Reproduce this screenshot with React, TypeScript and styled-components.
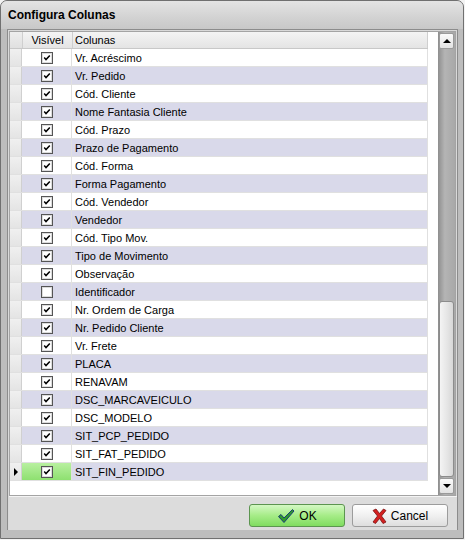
import styled, { createGlobalStyle } from 'styled-components'

const GlobalStyle = createGlobalStyle`
  html, body {
    margin: 0;
    padding: 0;
    background: #f2f2f2;
  }
  body {
    font-family: 'Liberation Sans', Arial, sans-serif;
  }
`

type Row = { label: string; visible: boolean }

const rows: Row[] = [
  { label: 'Vr. Acréscimo', visible: true },
  { label: 'Vr. Pedido', visible: true },
  { label: 'Cód. Cliente', visible: true },
  { label: 'Nome Fantasia Cliente', visible: true },
  { label: 'Cód. Prazo', visible: true },
  { label: 'Prazo de Pagamento', visible: true },
  { label: 'Cód. Forma', visible: true },
  { label: 'Forma Pagamento', visible: true },
  { label: 'Cód. Vendedor', visible: true },
  { label: 'Vendedor', visible: true },
  { label: 'Cód. Tipo Mov.', visible: true },
  { label: 'Tipo de Movimento', visible: true },
  { label: 'Observação', visible: true },
  { label: 'Identificador', visible: false },
  { label: 'Nr. Ordem de Carga', visible: true },
  { label: 'Nr. Pedido Cliente', visible: true },
  { label: 'Vr. Frete', visible: true },
  { label: 'PLACA', visible: true },
  { label: 'RENAVAM', visible: true },
  { label: 'DSC_MARCAVEICULO', visible: true },
  { label: 'DSC_MODELO', visible: true },
  { label: 'SIT_PCP_PEDIDO', visible: true },
  { label: 'SIT_FAT_PEDIDO', visible: true },
  { label: 'SIT_FIN_PEDIDO', visible: true }
]

const CheckBox = ({ checked }: { checked: boolean }) => (
  <svg width="12" height="12" viewBox="0 0 12 12">
    <rect x="0.5" y="0.5" width="11" height="11" fill="#fff" stroke="#555" />
    <rect x="1.5" y="1.5" width="9" height="9" fill="none" stroke="#dcdcdc" />
    {checked && (
      <path d="M3.2 5.6 L5 7.6 L8.8 3.4" fill="none" stroke="#000" strokeWidth="1.5" />
    )}
  </svg>
)

const CheckIcon = () => (
  <svg width="18" height="16" viewBox="0 0 18 16">
    <path
      d="M1.5 8.5 L4 6.5 L7 10 L15.5 1.5 L17 3 L7 14.5 Z"
      fill="#2f9a2a"
      stroke="#1a3a7a"
      strokeWidth="1"
      strokeLinejoin="round"
    />
  </svg>
)

const CrossIcon = () => (
  <svg width="15" height="16" viewBox="0 0 15 16">
    <path
      d="M1 2.5 L4 1 L7.5 5.5 L11.5 1 L14 2.5 L9.5 8 L14 14 L11 15.5 L7.5 10.5 L3.5 15.5 L1 14 L5.5 8 Z"
      fill="#d32020"
      stroke="#7a1010"
      strokeWidth="0.8"
      strokeLinejoin="round"
    />
  </svg>
)

const App = () => {
  const current = rows.length - 1
  return (
    <>
      <GlobalStyle />
      <Window>
        <TitleBar>Configura Colunas</TitleBar>
        <Client>
          <Grid>
            <Table>
              <HeaderRow>
                <IndicatorHead />
                <HeadCell $center>Visível</HeadCell>
                <HeadCell>Colunas</HeadCell>
              </HeaderRow>
              {rows.map((r, i) => (
                <DataRow key={r.label} $alt={i % 2 === 1}>
                  <Indicator>{i === current && <Pointer />}</Indicator>
                  <CheckCell $active={i === current}>
                    <CheckBox checked={r.visible} />
                  </CheckCell>
                  <TextCell>{r.label}</TextCell>
                </DataRow>
              ))}
            </Table>
            <Gap />
            <ScrollBar>
              <ScrollBtn>
                <Arrow $up />
              </ScrollBtn>
              <Track>
                <Thumb />
              </Track>
              <ScrollBtn>
                <Arrow />
              </ScrollBtn>
            </ScrollBar>
          </Grid>
          <ButtonBar>
            <Button $primary>
              <CheckIcon />
              OK
            </Button>
            <Button>
              <CrossIcon />
              Cancel
            </Button>
          </ButtonBar>
        </Client>
      </Window>
    </>
  )
}

const Window = styled.div`
  width: 462px;
  height: 537px;
  border: 1px solid #707070;
  border-radius: 7px 7px 0 0;
  background: #bdbdbd;
  display: flex;
  flex-direction: column;
  overflow: hidden;
`

const TitleBar = styled.div`
  height: 28px;
  flex: none;
  display: flex;
  align-items: center;
  padding-left: 7px;
  box-sizing: border-box;
  font-family: 'Liberation Sans', Arial, sans-serif;
  font-weight: 700;
  font-size: 12px;
  color: #000;
  background: linear-gradient(#e4e4e4, #d2d2d2 60%, #c8c8c8);
`

const Client = styled.div`
  margin: 0 5px 0 6px;
  border: 1px solid #8c8c8c;
  border-bottom: none;
  background: #d9d9d9;
  display: flex;
  flex-direction: column;
  height: 501px;
  box-sizing: border-box;
  padding: 1px 0 0 1px;
`

const Grid = styled.div`
  width: 447px;
  height: 465px;
  box-sizing: border-box;
  border: 1px solid #a4a4a4;
  background: #fff;
  display: flex;
`

const Table = styled.div`
  width: 418px;
  display: flex;
  flex-direction: column;
`

const HeaderRow = styled.div`
  display: flex;
  height: 17px;
  box-sizing: border-box;
  border-bottom: 1px solid #c8c8c8;
  background: linear-gradient(#f4f4f4, #e4e4e4);
`

const IndicatorHead = styled.div`
  width: 12px;
  border-right: 1px solid #cfcfcf;
  background: linear-gradient(#eeeeee, #e0e0e0);
`

const HeadCell = styled.div<{ $center?: boolean }>`
  display: flex;
  align-items: center;
  justify-content: ${p => (p.$center ? 'center' : 'flex-start')};
  width: ${p => (p.$center ? '49px' : 'auto')};
  flex: ${p => (p.$center ? 'none' : '1')};
  padding-left: ${p => (p.$center ? '0' : '2px')};
  border-right: 1px solid #cfcfcf;
  font-size: 11px;
  color: #000;
`

const DataRow = styled.div<{ $alt: boolean }>`
  display: flex;
  height: 18px;
  box-sizing: border-box;
  border-bottom: 1px solid #e0e0e0;
  background: ${p => (p.$alt ? '#d9d9ea' : '#ffffff')};
`

const Indicator = styled.div`
  width: 12px;
  flex: none;
  box-sizing: border-box;
  border-right: 1px solid #d0d0d0;
  background: linear-gradient(#f0f0f0, #e4e4e4);
  display: flex;
  align-items: center;
  justify-content: center;
`

const Pointer = styled.div`
  width: 0;
  height: 0;
  border-top: 4px solid transparent;
  border-bottom: 4px solid transparent;
  border-left: 4px solid #000;
  margin-left: 1px;
`

const CheckCell = styled.div<{ $active: boolean }>`
  width: 50px;
  flex: none;
  box-sizing: border-box;
  border-right: 1px solid #e0e0e0;
  display: flex;
  align-items: center;
  justify-content: center;
  background: ${p => (p.$active ? 'linear-gradient(#b8f0a0, #8ee070)' : 'transparent')};
`

const TextCell = styled.div`
  flex: 1;
  display: flex;
  align-items: center;
  padding-left: 3px;
  border-right: 1px solid #e0e0e0;
  font-size: 11px;
  color: #000;
  white-space: nowrap;
`

const Gap = styled.div`
  width: 10px;
  background: #fff;
`

const ScrollBar = styled.div`
  width: 17px;
  display: flex;
  flex-direction: column;
  background: linear-gradient(90deg, #8e8e8e, #b4b4b4 40%, #a8a8a8);
  padding: 1px 0;
  box-sizing: border-box;
`

const ScrollBtn = styled.div`
  height: 16px;
  margin: 0 1px;
  box-sizing: border-box;
  border: 1px solid #9a9a9a;
  border-radius: 2px;
  background: linear-gradient(#fafafa, #e2e2e2);
  display: flex;
  align-items: center;
  justify-content: center;
`

const Arrow = styled.div<{ $up?: boolean }>`
  width: 0;
  height: 0;
  border-left: 4px solid transparent;
  border-right: 4px solid transparent;
  ${p => (p.$up ? 'border-bottom: 4px solid #000;' : 'border-top: 4px solid #000;')}
`

const Track = styled.div`
  flex: 1;
  display: flex;
  flex-direction: column;
  justify-content: flex-end;
  padding: 0 0 1px;
`

const Thumb = styled.div`
  height: 176px;
  margin: 0 1px;
  box-sizing: border-box;
  border: 1px solid #8c8c8c;
  border-radius: 3px;
  background: linear-gradient(90deg, #f4f4f4, #e4e4e4 60%, #d6d6d6);
`

const ButtonBar = styled.div`
  flex: 1;
  display: flex;
  justify-content: flex-end;
  align-items: flex-start;
  gap: 7px;
  padding: 7px 9px 0 0;
  border-top: 1px solid #f4f4f4;
  background: #dcdcdc;
`

const Button = styled.div<{ $primary?: boolean }>`
  width: 96px;
  height: 23px;
  box-sizing: border-box;
  display: flex;
  align-items: center;
  justify-content: center;
  gap: 4px;
  border-radius: 3px;
  font-size: 12px;
  color: #000;
  border: 1px solid ${p => (p.$primary ? '#5c9550' : '#9c9c9c')};
  background: ${p =>
    p.$primary
      ? 'linear-gradient(#d4f8c4, #a6ec88 50%, #80dc60)'
      : 'linear-gradient(#ffffff, #f0f0f0 50%, #dedede)'};
`

export default App
